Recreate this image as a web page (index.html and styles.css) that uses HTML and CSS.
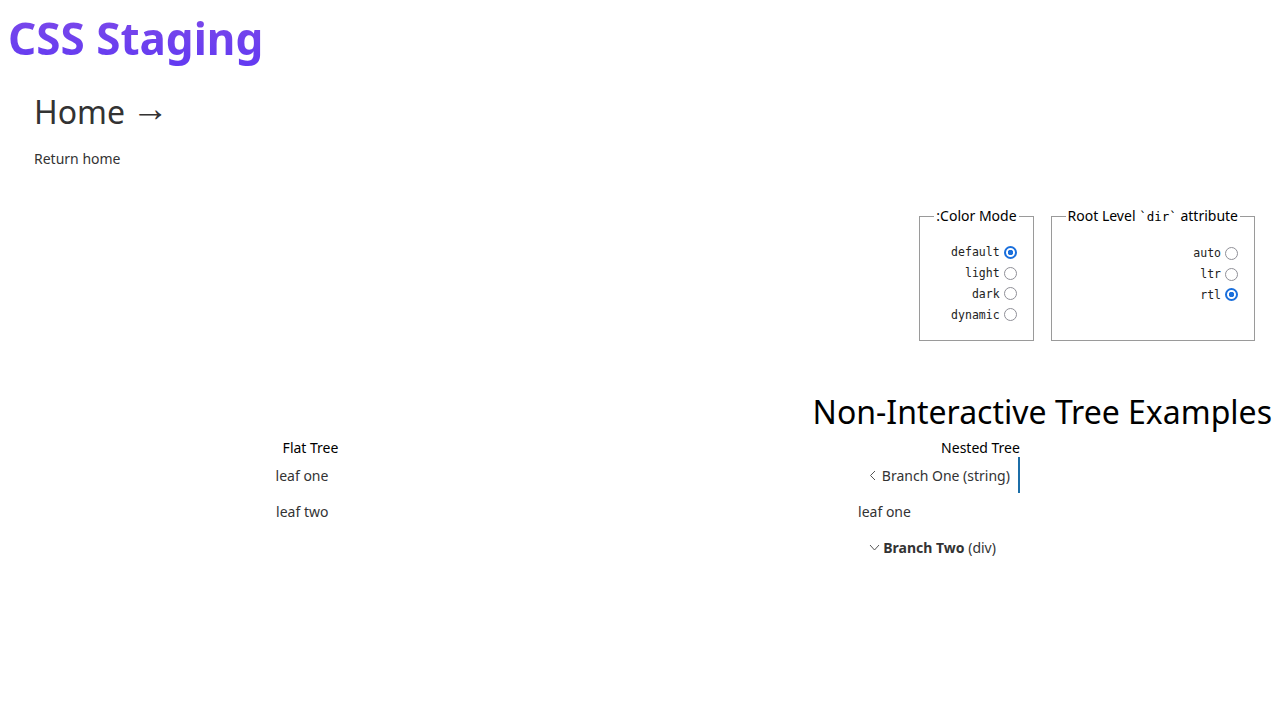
FILE: index.html
```html
<!DOCTYPE html>
<html lang="en">
<head>
<meta charset="utf-8">
<title>CSS Staging</title>
<link rel="stylesheet" href="styles.css">
</head>
<body>
<header class="site-header">
  <h1 class="brand">CSS Staging</h1>
</header>
<main class="page">
  <section class="intro">
    <h2 class="page-title">Home <span class="arrow">→</span></h2>
    <p class="page-link">Return home</p>
  </section>

  <div class="controls">
    <fieldset class="switcher">
      <legend>:Color Mode</legend>
      <div class="options">
        <label class="option"><input type="radio" name="mode" checked><span>default</span></label>
        <label class="option"><input type="radio" name="mode"><span>light</span></label>
        <label class="option"><input type="radio" name="mode"><span>dark</span></label>
        <label class="option"><input type="radio" name="mode"><span>dynamic</span></label>
      </div>
    </fieldset>
    <fieldset class="switcher">
      <legend>Root Level <code>`dir`</code> attribute</legend>
      <div class="options">
        <label class="option"><input type="radio" name="dir"><span>auto</span></label>
        <label class="option"><input type="radio" name="dir"><span>ltr</span></label>
        <label class="option"><input type="radio" name="dir" checked><span>rtl</span></label>
      </div>
    </fieldset>
  </div>

  <section class="examples">
    <h2 class="examples-title">Non-Interactive Tree Examples</h2>
    <div class="tree-grid">
      <div class="tree">
        <div class="tree-caption">Flat Tree</div>
        <div class="tree-row flat-item">leaf one</div>
        <div class="tree-row flat-item">leaf two</div>
      </div>
      <div class="tree">
        <div class="tree-caption">Nested Tree</div>
        <div class="tree-row branch branch-one">
          <svg class="chev" width="8" height="11" viewBox="0 0 8 11"><polyline points="6,1 1.5,5.5 6,10" fill="none" stroke="#555" stroke-width="1"/></svg>
          <span>Branch One (string)</span>
        </div>
        <div class="tree-row nested-leaf">leaf one</div>
        <div class="tree-row branch branch-two">
          <svg class="chev" width="11" height="7" viewBox="0 0 11 7"><polyline points="1,1 5.5,6 10,1" fill="none" stroke="#555" stroke-width="1"/></svg>
          <span><b>Branch Two</b> (div)</span>
        </div>
      </div>
    </div>
  </section>
</main>
</body>
</html>
```

FILE: styles.css
```css
html, body {
  margin: 0;
  padding: 0;
  background: #fff;
}

body {
  padding: 8px;
  font-family: "Noto Sans", "Open Sans", sans-serif;
  color: #333;
  font-size: 14px;
}

.brand {
  margin: 0;
  font-size: 44px;
  font-weight: 700;
  line-height: 61px;
  background: linear-gradient(to bottom, #7e4ae9, #6139f2);
  -webkit-background-clip: text;
  background-clip: text;
  color: transparent;
  width: max-content;
}

.intro {
  padding-left: 26px;
  padding-top: 19px;
}

.page-title {
  margin: 0;
  font-size: 32px;
  font-weight: 400;
  line-height: 48px;
  height: 48px;
  color: #333;
}

.arrow {
  font-family: "Liberation Sans", sans-serif;
  font-size: 37px;
  line-height: 1;
  vertical-align: 3px;
  margin-left: -2px;
}

.page-link {
  margin: 13px 0 0;
  font-size: 14px;
  line-height: 19px;
  color: #333;
}

.controls {
  display: flex;
  justify-content: flex-end;
  gap: 17px;
  padding-right: 17px;
  margin-top: 38px;
}

.switcher {
  margin: 0;
  border: 1px solid #9a9a9a;
  padding: 0 14px;
  color: #000;
}

.switcher legend {
  padding: 0 2px;
  margin-left: auto;
  font-size: 14px;
  line-height: 20px;
}

.switcher code {
  font-family: "DejaVu Sans Mono", monospace;
  font-size: 12.5px;
}

.options {
  padding-top: 16px;
  padding-bottom: 15px;
  display: flex;
  flex-direction: column;
  align-items: flex-end;
}

.option {
  display: flex;
  align-items: center;
  height: 20.8px;
  font-family: "DejaVu Sans Mono", monospace;
  font-size: 11.5px;
  color: #222;
}

.option span {
  order: 1;
}

.option input {
  order: 2;
  appearance: none;
  -webkit-appearance: none;
  box-sizing: border-box;
  margin: 0 2px 0 4px;
  width: 13px;
  height: 13px;
  border: 1.7px solid #8f8f97;
  border-radius: 50%;
  background: #fff;
}

.option input:checked {
  border: 2px solid #1a6fdc;
  background: radial-gradient(circle, #1a6fdc 0 2.5px, #fff 3px);
}

.examples {
  margin-top: 49px;
}

.examples-title {
  margin: 0;
  text-align: right;
  font-size: 32px;
  font-weight: 400;
  line-height: 44px;
  color: #000;
}

.tree-grid {
  display: grid;
  grid-template-columns: 1fr 1fr;
  margin-top: 4px;
}

.tree {
  justify-self: center;
  padding-right: 34px;
  display: flex;
  flex-direction: column;
  align-items: flex-end;
}

.tree-caption {
  color: #000;
  line-height: 19px;
}

.tree-row {
  height: 36px;
  display: flex;
  align-items: center;
  color: #333;
}

.flat-item {
  padding-right: 10px;
}

.branch {
  gap: 5px;
}

.branch-one {
  padding-right: 8px;
  border-right: 2px solid #1c6ea8;
}

.branch-two {
  gap: 3px;
  padding-right: 24px;
}

.branch-two b {
  font-weight: 700;
}

.nested-leaf {
  padding-right: 109px;
}

.chev {
  display: block;
}
```
